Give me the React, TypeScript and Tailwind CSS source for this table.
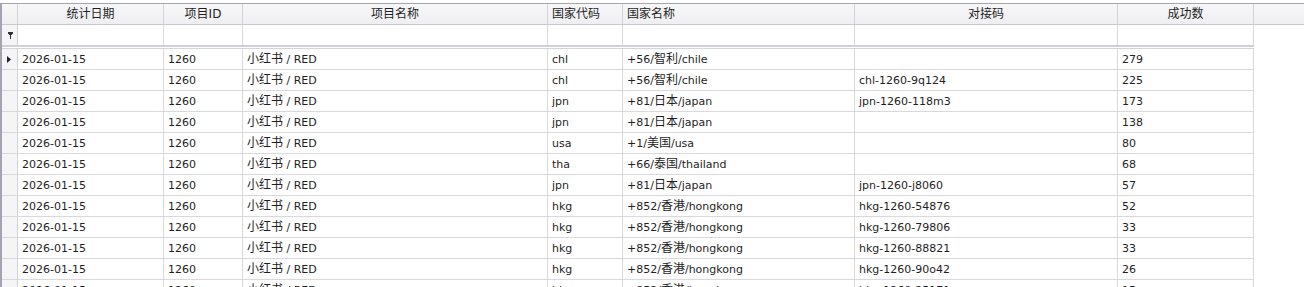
import React from "react";

const cols = [
  { w: "w-[146px]", title: "统计日期", align: "center" },
  { w: "w-[79px]", title: "项目ID", align: "center" },
  { w: "w-[305px]", title: "项目名称", align: "center" },
  { w: "w-[75px]", title: "国家代码", align: "left" },
  { w: "w-[232px]", title: "国家名称", align: "left" },
  { w: "w-[263px]", title: "对接码", align: "center" },
  { w: "w-[136px]", title: "成功数", align: "center" },
];

const rows: string[][] = [
  ["chl", "+56/智利/chile", "", "279"],
  ["chl", "+56/智利/chile", "chl-1260-9q124", "225"],
  ["jpn", "+81/日本/japan", "jpn-1260-118m3", "173"],
  ["jpn", "+81/日本/japan", "", "138"],
  ["usa", "+1/美国/usa", "", "80"],
  ["tha", "+66/泰国/thailand", "", "68"],
  ["jpn", "+81/日本/japan", "jpn-1260-j8060", "57"],
  ["hkg", "+852/香港/hongkong", "hkg-1260-54876", "52"],
  ["hkg", "+852/香港/hongkong", "hkg-1260-79806", "33"],
  ["hkg", "+852/香港/hongkong", "hkg-1260-88821", "33"],
  ["hkg", "+852/香港/hongkong", "hkg-1260-90o42", "26"],
  ["hkg", "+852/香港/hongkong", "hkg-1260-25171", "15"],
];

const font = {
  fontFamily: '"DejaVu Sans", "Noto Sans CJK SC", sans-serif',
};

function Mixed({ text }: { text: string }) {
  const parts = text.split(/([\u4e00-\u9fff]+)/);
  return (
    <span className="whitespace-pre">
      {parts.map((p, i) =>
        /[\u4e00-\u9fff]/.test(p) ? (
          <span key={i} className="text-[12px] leading-[0px]">
            {p}
          </span>
        ) : (
          <React.Fragment key={i}>{p}</React.Fragment>
        )
      )}
    </span>
  );
}

export default function App() {
  return (
    <div
      className="w-[1304px] h-[287px] overflow-hidden bg-white text-[11px] leading-none text-[#1e1e24]"
      style={font}
    >
      <div className="h-[3px] bg-white" />
      <div className="flex">
        <div className="w-[2px] shrink-0 bg-[#a4a4ae]" />
        <div className="flex-1 flex flex-col">
          {/* top line */}
          <div className="h-[1px] bg-[#a4a4ae]" />
          {/* header */}
          <div className="flex h-[21px] border-b border-[#c8c8d2] bg-gradient-to-b from-[#f7f7f9] to-[#efeff2]">
            <div className="w-[16px] shrink-0 border-r border-[#d2d2da]" />
            {cols.map((c) => (
              <div
                key={c.title}
                className={`${c.w} shrink-0 border-r border-[#d2d2da] flex items-center ${
                  c.align === "center" ? "justify-center" : "justify-start pl-[4px]"
                } text-[12px]`}
              >
                {c.title}
              </div>
            ))}
            <div className="flex-1" />
          </div>
          {/* filter row */}
          <div className="flex h-[22px] w-[1252px] border-b-2 border-[#d0d0d8]">
            <div className="w-[16px] shrink-0 border-r border-[#d2d2da] bg-[#f5f5f7] flex items-center justify-center">
              <svg width="5" height="7" viewBox="0 0 5 7" className="ml-[1px]">
                <path d="M0 0h5v2H4v1H3v4H2V3H1V2H0z" fill="#303038" />
              </svg>
            </div>
            {cols.map((c) => (
              <div key={c.title} className={`${c.w} shrink-0 border-r border-[#d8d8de]`} />
            ))}
          </div>
          <div className="h-[1px] w-[1252px] bg-white" />
          <div className="h-[1px] w-[1252px] bg-[#d4d4dc]" />
          {/* data rows */}
          {rows.map((r, i) => (
            <div key={i} className="flex h-[21px] w-[1252px] border-b border-[#d8d8de] shrink-0">
              <div className="w-[16px] shrink-0 border-r border-[#d2d2da] bg-[#f5f5f7] flex items-center justify-center">
                {i === 0 && (
                  <svg width="4" height="7" viewBox="0 0 4 7" className="ml-[-1px]">
                    <path d="M0 0L4 3.5L0 7z" fill="#202028" />
                  </svg>
                )}
              </div>
              {["2026-01-15", "1260", "小红书 / RED", r[0], r[1], r[2], r[3]].map((v, j) => (
                <div
                  key={j}
                  className={`${cols[j].w} shrink-0 border-r border-[#d8d8de] flex items-center pl-[4px] pt-[1px] whitespace-nowrap`}
                >
                  <Mixed text={v} />
                </div>
              ))}
            </div>
          ))}
        </div>
      </div>
    </div>
  );
}
